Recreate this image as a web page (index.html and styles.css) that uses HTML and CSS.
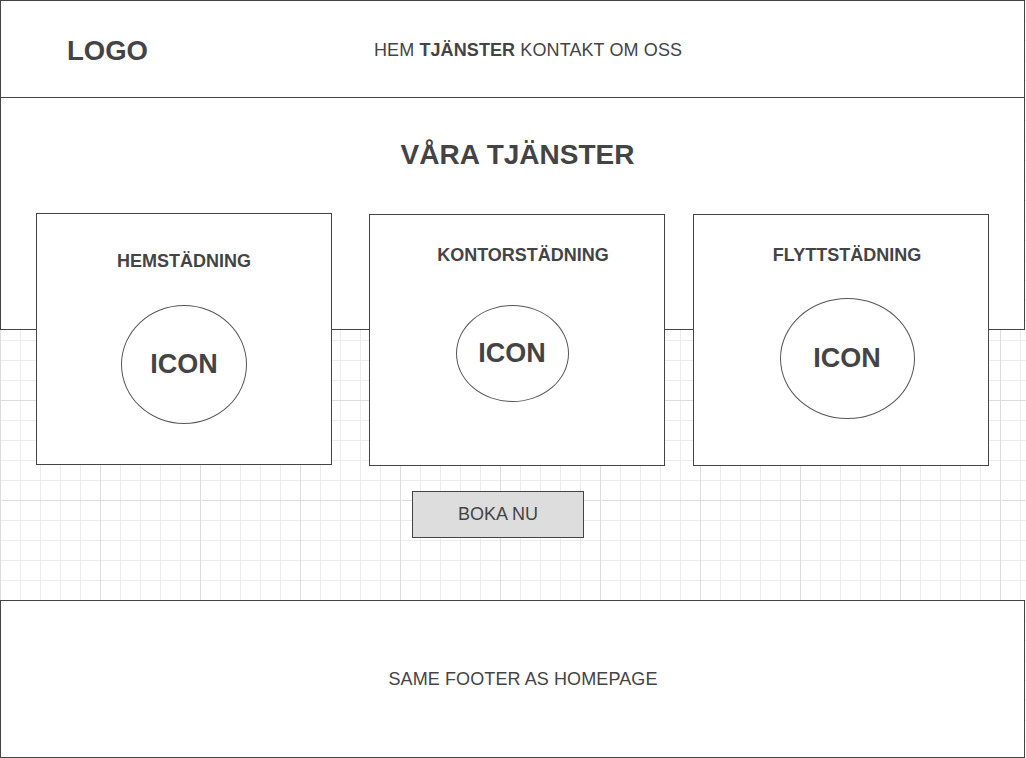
FILE: index.html
```html
<!DOCTYPE html>
<html lang="sv">
  <head>
    <meta charset="UTF-8" />
    <meta name="viewport" content="width=device-width, initial-scale=1.0" />
    <title>Våra tjänster - Wireframe</title>
    <link rel="stylesheet" href="styles.css">
  </head>
  <body>
    <header class="site-header">
      <div class="logo">LOGO</div>
      <nav class="main-nav">
        <a href="#">HEM</a>
        <a href="#" class="active">TJÄNSTER</a>
        <a href="#">KONTAKT</a>
        <a href="#">OM OSS</a>
      </nav>
    </header>

    <main>
      <section class="hero">
        <h2>VÅRA TJÄNSTER</h2>
        <div class="cards">
          <div class="card card-home">
            <h3>HEMSTÄDNING</h3>
            <div class="icon-circle">ICON</div>
          </div>
          <div class="card card-office">
            <h3>KONTORSTÄDNING</h3>
            <div class="icon-circle">ICON</div>
          </div>
          <div class="card card-move">
            <h3>FLYTTSTÄDNING</h3>
            <div class="icon-circle">ICON</div>
          </div>
        </div>
      </section>

      <div class="actions">
        <button type="button" class="book-button">BOKA NU</button>
      </div>
    </main>

    <footer class="site-footer">
      <p>SAME FOOTER AS HOMEPAGE</p>
    </footer>
  </body>
</html>
```

FILE: styles.css
```css
* {
  margin: 0;
  padding: 0;
  box-sizing: border-box;
}

body {
  font-family: "Liberation Sans", Arial, sans-serif;
  color: #444444;
  width: 1026px;
  height: 758px;
  overflow: hidden;
  background-color: #ffffff;
  background-image:
    linear-gradient(#dddddd 1px, transparent 1px),
    linear-gradient(90deg, #dddddd 1px, transparent 1px),
    linear-gradient(#ebebeb 1px, transparent 1px),
    linear-gradient(90deg, #ebebeb 1px, transparent 1px);
  background-size: 100px 100px, 100px 100px, 20px 20px, 20px 20px;
}

/* header */
.site-header {
  display: flex;
  align-items: center;
  width: 1025px;
  height: 98px;
  padding: 3px 0 0 66px;
  border: 1px solid #444444;
  background-color: #ffffff;
}

.logo {
  font-size: 27.5px;
  font-weight: bold;
}

.main-nav {
  margin-left: 226px;
  font-size: 18px;
  letter-spacing: 0.1px;
}

.main-nav a {
  color: #444444;
  text-decoration: none;
}

.main-nav .active {
  font-weight: bold;
}

/* hero + cards */
.hero {
  width: 1025px;
  height: 232px;
  padding-top: 40px;
  border: 1px solid #444444;
  border-top: none;
  background-color: #ffffff;
}

.hero h2 {
  font-size: 28px;
  line-height: 34px;
  text-align: center;
  padding-left: 10px;
}

.cards {
  display: flex;
  align-items: flex-start;
  margin-top: 42px;
  padding-left: 35px;
}

.card {
  display: flex;
  flex-direction: column;
  align-items: center;
  width: 296px;
  height: 252px;
  border: 1px solid #444444;
  background-color: #ffffff;
  padding-top: 29px;
}

.card h3 {
  font-size: 18px;
  line-height: 22px;
}

.icon-circle {
  display: flex;
  justify-content: center;
  align-items: center;
  border: 1px solid #555555;
  border-radius: 50%;
  font-size: 27px;
  font-weight: bold;
}

.card-home {
  margin-top: -1px;
  padding-top: 36px;
}

.card-home .icon-circle {
  width: 126px;
  height: 119px;
  margin-top: 33px;
}

.card-office {
  margin-left: 37px;
}

.card-office h3 {
  margin-left: 12px;
}

.card-office .icon-circle {
  width: 113px;
  height: 97px;
  margin-top: 39px;
  margin-left: -10px;
}

.card-move {
  margin-left: 28px;
  padding-left: 12px;
}

.card-move .icon-circle {
  width: 135px;
  height: 121px;
  margin-top: 32px;
}

/* button area */
.actions {
  height: 270px;
  padding: 161px 0 0 412px;
}

.book-button {
  width: 172px;
  height: 47px;
  border: 1px solid #444444;
  background-color: #dddddd;
  color: #444444;
  font-family: inherit;
  font-size: 18px;
  cursor: pointer;
}

/* footer */
.site-footer {
  display: flex;
  justify-content: center;
  align-items: center;
  width: 1025px;
  height: 158px;
  border: 1px solid #444444;
  background-color: #ffffff;
}

.site-footer p {
  font-size: 18px;
  padding-left: 21px;
  letter-spacing: 0.1px;
}
```
